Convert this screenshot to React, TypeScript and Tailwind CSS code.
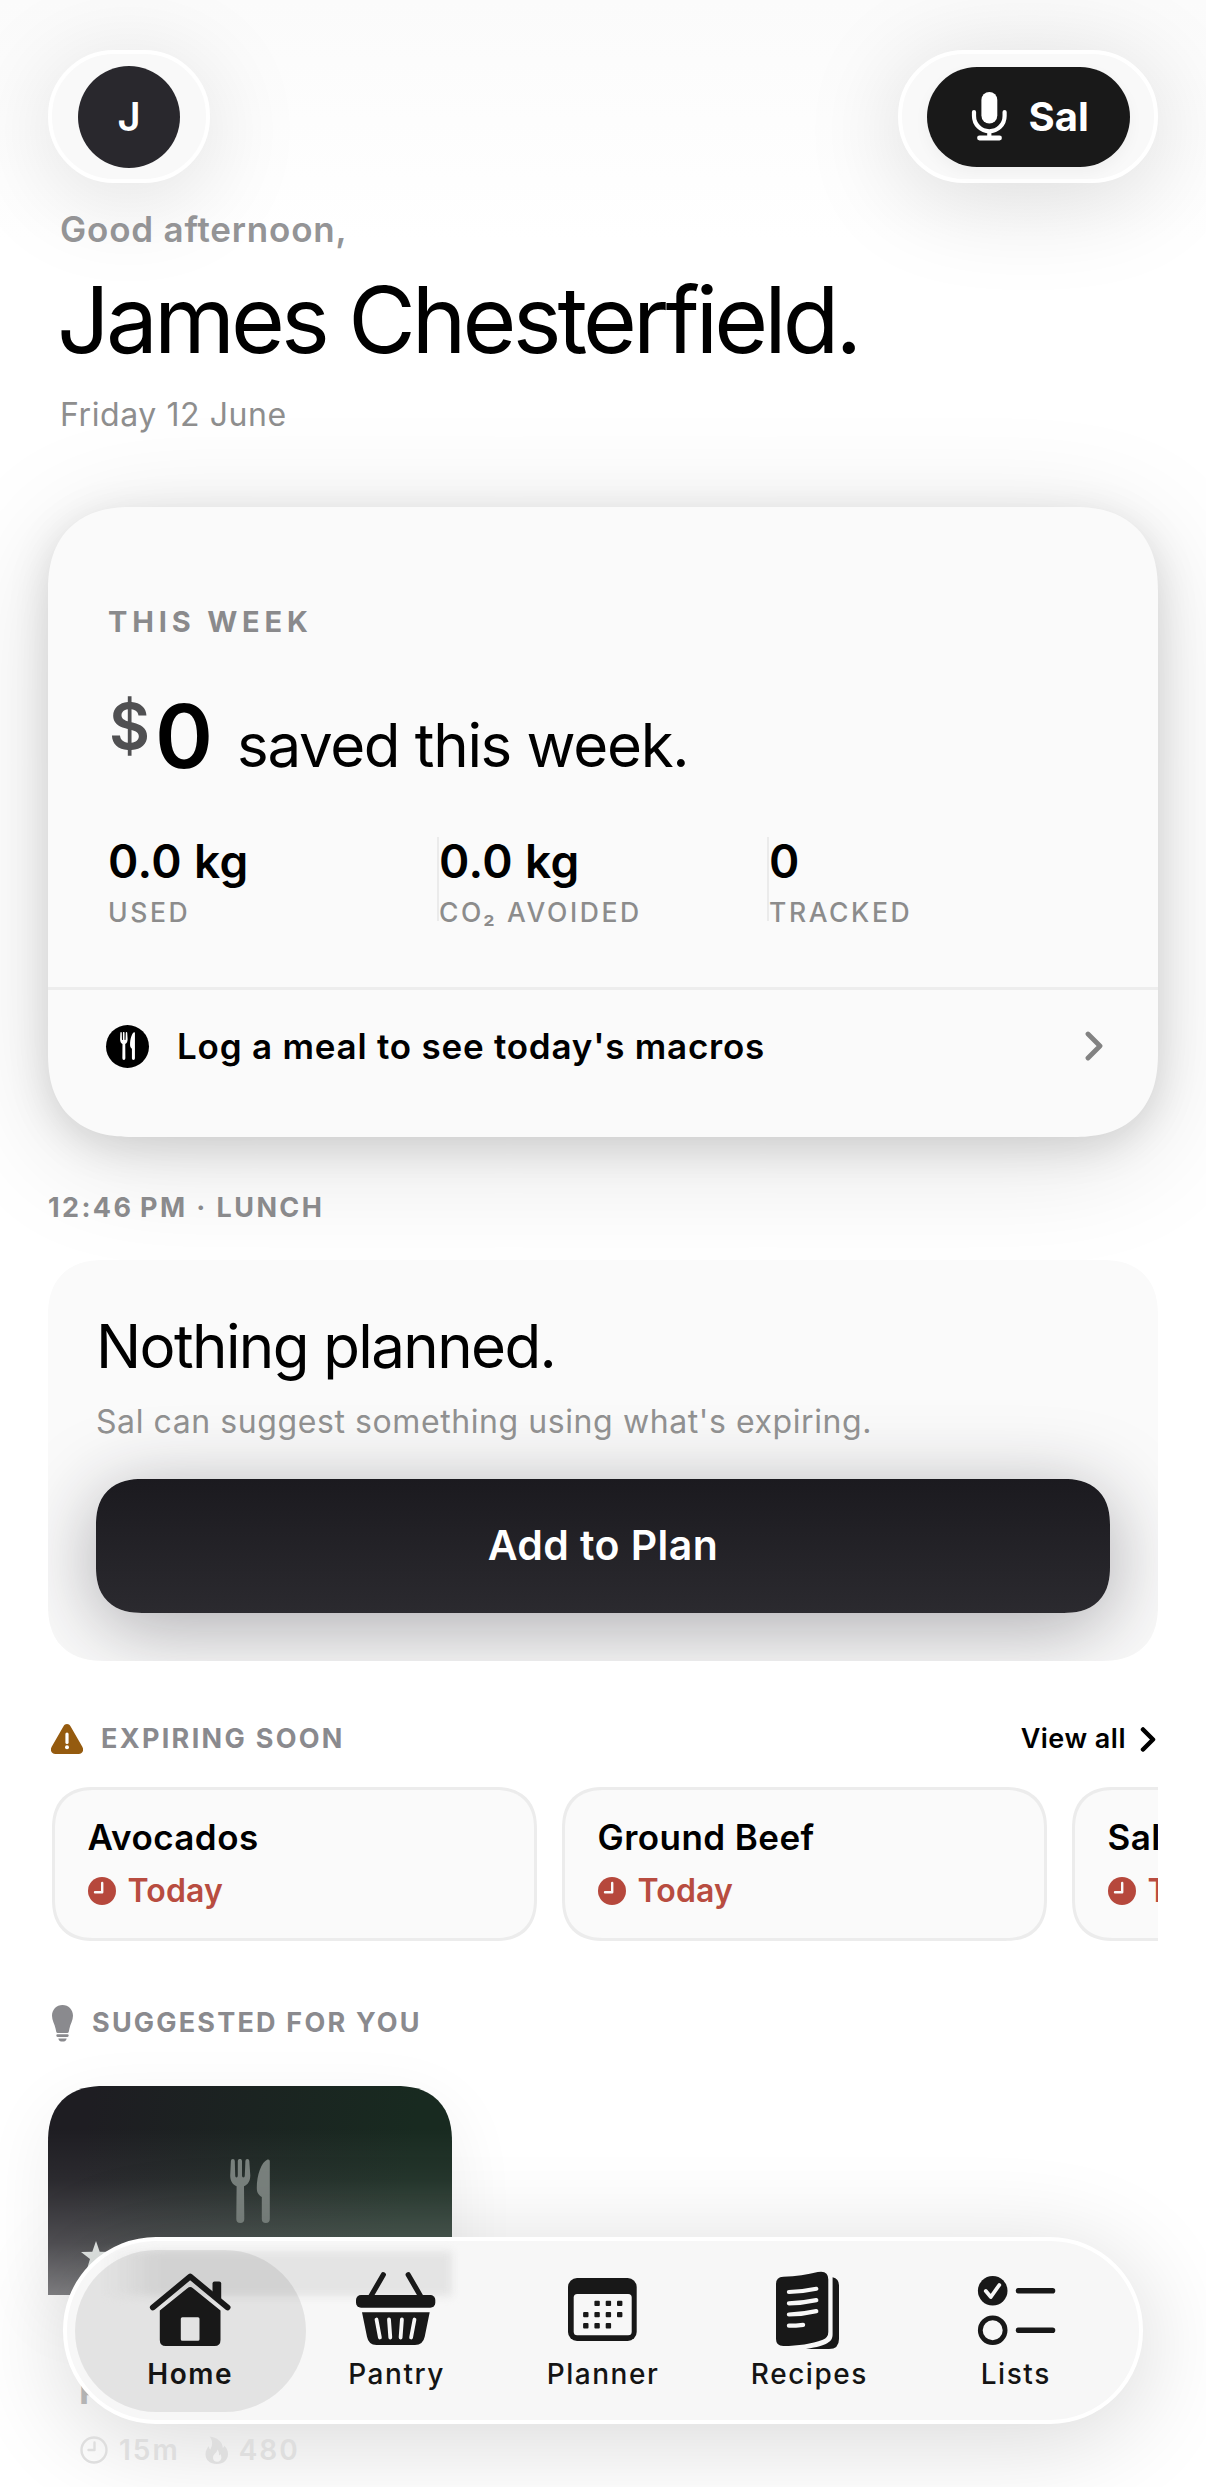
import type { ReactNode } from "react";

function ForkKnife({ className }: { className: string }) {
  return (
    <svg viewBox="0 0 40 64" className={className} fill="currentColor" preserveAspectRatio="none">
      <path d="M.9 2a1.9 1.9 0 0 1 3.9 0L5.2 16.5q0 2 1.3 2t1.3-2V2a2.1 2.1 0 0 1 4.2 0v14.500q0 2 1.400 2t1.400-2L15.400 2a1.900 1.900 0 0 1 3.900 0L20.300 16.500c0 5-2 9-6.300 10.800L14.300 60a3.900 3.900 0 0 1-8 0L6.600 27.300C2.300 25.500.200 21.500.200 16.500z" />
      <path d="M37.500.600q2.300-.600 2.300 1.600V60a4 4 0 0 1-8 0V38c-3.600-2.200-5-4.500-5-9C26.800 16 31.500 3 37.500.600z" />
    </svg>
  );
}

function MicIcon() {
  return (
    <svg viewBox="0 0 37 51" className="h-[51px] w-[37px]" fill="none" stroke="currentColor" strokeLinecap="round">
      <rect x="10.400" y="1" width="15.900" height="31.500" rx="7.950" fill="currentColor" stroke="none" />
      <path d="M3 21v4a15.300 15.300 0 0 0 30.600 0v-4M18.300 41v5" strokeWidth="4.200" />
      <path d="M8.500 47h20" strokeWidth="4.800" />
    </svg>
  );
}

function ChevronRight({ className, weight }: { className: string; weight: number }) {
  return (
    <svg viewBox="0 0 18 30" className={className} fill="none" stroke="currentColor" strokeWidth={weight} strokeLinecap="round" strokeLinejoin="round">
      <path d="M3 3l12 12L3 27" />
    </svg>
  );
}

function WarningIcon() {
  return (
    <svg viewBox="0 0 32 30" className="h-[30px] w-8">
      <path d="M16 0c1.500 0 2.700.800 3.500 2.200l11.800 20.600c2 3.500.200 7.200-3.800 7.200h-23c-4 0-5.800-3.700-3.800-7.200L12.500 2.200C13.300.800 14.500 0 16 0z" fill="#955b0f" />
      <path d="M16 10v8.500" stroke="#fff" strokeWidth="3.200" strokeLinecap="round" />
      <circle cx="16" cy="23.200" r="2" fill="#fff" />
    </svg>
  );
}

function BulbIcon() {
  return (
    <svg viewBox="0 0 21 37" className="h-[37px] w-[21px]" fill="#8a8a8e">
      <path d="M10.500 0C16.500 0 21 4.600 21 10.800c0 4.700-2.600 8.200-3.600 13l-.7 3.200q-.3 1.100-1.400 1.100H5.700q-1.100 0-1.400-1.100l-.7-3.200C2.600 19 0 15.500 0 10.800 0 4.600 4.500 0 10.500 0z" />
      <path d="M5.600 29.300h9.800a1.300 1.300 0 0 1 0 2.600H5.600a1.300 1.300 0 0 1 0-2.600zM6.300 33.400h8.400q-.8 3.200-4.200 3.200t-4.200-3.200z" />
    </svg>
  );
}

function ClockFilled() {
  return (
    <svg viewBox="0 0 28 28" className="size-7 shrink-0">
      <circle cx="14" cy="14" r="14" fill="#b6483c" />
      <path d="M14.200 6v9.200H7" fill="none" stroke="#fafafa" strokeWidth="2.400" strokeLinecap="round" strokeLinejoin="round" />
    </svg>
  );
}

function HomeIcon() {
  return (
    <g transform="translate(1.500 2)">
      <path d="M63 26V11.500q0-2 2-2h4.700q2 0 2 2V32z" fill="#181818" />
      <path d="M3.300 35.400L40.700 4.600l37.400 30.800" fill="none" stroke="#181818" strokeWidth="5.800" strokeLinecap="round" strokeLinejoin="round" />
      <path fillRule="evenodd" d="M37.900 16.200q2.800-2.300 5.600 0L71 38.500V68q0 6-6 6H16.300q-6 0-6-6V38.500zM32.800 45.300q-1.500 0-1.500 1.500v20.400q0 1.500 1.500 1.500h15.700q1.500 0 1.500-1.500V46.800q0-1.500-1.500-1.500z" fill="#181818" />
    </g>
  );
}

function BasketIcon() {
  return (
    <g transform="translate(0 1)">
      <path d="M28.300 3.700L15.700 25.500M53.200 3.700l12.600 21.800" stroke="#181818" strokeWidth="5.200" strokeLinecap="round" />
      <rect x="1" y="24" width="79.300" height="12.700" rx="5" fill="#181818" />
      <path d="M7 41.300h67.700l-5 24.500Q68 74 60 74H21.500q-8 0-9.500-8.200z" fill="#181818" />
      <path d="M21.500 48.500l3.400 18M34 48.500l1.300 18M46.900 48.500l-1.300 18M59.500 48.500l-3.400 18" stroke="#f7f7f7" strokeWidth="3.800" strokeLinecap="round" />
    </g>
  );
}

function PlannerIcon() {
  const dots = [[1, 0], [2, 0], [3, 0], [0, 1], [1, 1], [2, 1], [3, 1], [0, 2], [1, 2], [2, 2]];
  return (
    <g transform="translate(5.700 6)" fill="#181818">
      <rect x="1.300" y="2" width="68.700" height="63" rx="9" />
      <rect x="7" y="18" width="58" height="41.300" rx="3.500" fill="#f7f7f7" />
      {dots.map(([c, r]) => (
        <rect key={`${c}-${r}`} x={16.400 + c * 11.300} y={24.700 + r * 11.200} width="5.400" height="5.400" rx="1" />
      ))}
    </g>
  );
}

function RecipesIcon() {
  return (
    <g transform="translate(7.300 0)">
      <path d="M58.300 7.300q6.400 1.500 6.400 8V69q0 10-10 10h-23c12-2 17-3.500 21.500-6 4-2.300 5.100-5 5.100-9z" fill="#181818" />
      <path d="M9 6.800C22 6.500 33 4.600 43.500 2q10.500-2 10.500 7.500V62q0 5.500-5.500 7.700C37 74 24 75.800 9 76q-7.300 0-7.300-7V14q0-7 7.300-7.200z" fill="#181818" />
      <path d="M14.600 22q14-.3 27.400-3.200M14.600 33.300q14-.3 27.400-3.200M14.600 44.500q14-.3 27.400-3.400M14.600 55.700q7 0 14.200-.9" fill="none" stroke="#f7f7f7" strokeWidth="4.200" strokeLinecap="round" />
    </g>
  );
}

function ListsIcon() {
  return (
    <g transform="translate(3 5)" fill="none" stroke="#181818" strokeLinecap="round" strokeLinejoin="round">
      <circle cx="15.700" cy="15.700" r="14.800" fill="#181818" stroke="none" />
      <path d="M8.800 16l5 6L22.300 10" stroke="#f7f7f7" strokeWidth="3.800" />
      <circle cx="15.700" cy="55.300" r="12.400" strokeWidth="4.800" />
      <path d="M41.500 15.700h34M41.500 55.300h34" strokeWidth="5.600" />
    </g>
  );
}

function ExpiringCard({ name }: { name: string }) {
  return (
    <div className="flex h-[154px] w-[485px] shrink-0 flex-col rounded-[42px] border-[3px] border-[#ececec] bg-[#fafafa] pt-[25px] pl-[33px] [corner-shape:superellipse(1.25)]">
      <p className="text-[35px] leading-[44px] font-semibold tracking-[0.450px] whitespace-nowrap text-black">{name}</p>
      <div className="mt-[14px] flex items-center">
        <ClockFilled />
        <span className="ml-[12px] text-[32px] leading-9 font-semibold tracking-[0.140px] text-[#b84c40]">Today</span>
      </div>
    </div>
  );
}

function Stat({ value, label, divider }: { value: string; label: string; divider?: boolean }) {
  return (
    <div className={divider ? "-ml-px h-[84px] border-l-2 border-[#ebebeb]" : "h-[84px]"}>
      <p className="text-[46px] leading-[48px] font-semibold tracking-[0.400px] text-black">{value}</p>
      <p className="mt-[18px] text-[26.500px] leading-[18px] font-[550] tracking-[2.600px] whitespace-nowrap text-[#8c8c8c]">{label}</p>
    </div>
  );
}

function Tab({ label, icon, active }: { label: string; icon: ReactNode; active?: boolean }) {
  return (
    <div className="flex flex-col items-center">
      <svg viewBox="0 0 84 84" className="size-[84px]">{icon}</svg>
      <span className={active ? "mt-1.5 text-[28px] leading-7 font-semibold tracking-[1.500px] text-[#141414]" : "mt-1.5 text-[28px] leading-7 font-medium tracking-[1.550px] text-[#141414]"}>
        {label}
      </span>
    </div>
  );
}

export default function App() {
  return (
    <div className="relative h-[2487px] w-[1206px] overflow-hidden bg-white bg-linear-to-b from-[#fbfbfb] to-white to-[240px] px-12 font-['Inter','Noto_Sans',sans-serif]">
      <header className="flex justify-between pt-[50px]">
        <div className="flex h-[133px] w-[162px] items-center justify-center rounded-[66px] border-4 border-white bg-[#f9f9f9] shadow-[0_14px_100px_rgba(0,0,0,0.13)]">
          <div className="flex size-[102px] items-center justify-center rounded-full bg-[#29282d] text-[40px] font-semibold text-white">J</div>
        </div>
        <div className="flex h-[133px] w-[260px] items-center justify-center rounded-[66px] border-4 border-white bg-[#f9f9f9] shadow-[0_14px_100px_rgba(0,0,0,0.15)]">
          <button className="flex h-[100px] w-[203px] items-center rounded-[50px] bg-[#191919] pl-[44px] text-white shadow-[0_6px_16px_rgba(0,0,0,0.04)]">
            <MicIcon />
            <span className="ml-[21px] text-[40px] leading-[50px] font-bold">Sal</span>
          </button>
        </div>
      </header>

      <section className="relative pl-3">
        <p className="mt-6 text-[35px] leading-[44px] font-semibold tracking-[0.800px] text-[#949496]">Good afternoon,</p>
        <h1 className="mt-3 -ml-[3px] text-[92.500px] leading-[112px] font-normal tracking-[-3.900px] whitespace-nowrap text-black">James Chesterfield.</h1>
        <p className="mt-5 text-[32px] leading-10 tracking-[0.580px] text-[#8e8e8e]">Friday 12 June</p>
      </section>

      <section className="mt-[72px] h-[630px] rounded-[84px] bg-[#fafafa] pt-[97px] shadow-[0_10px_42px_rgba(0,0,0,0.13),0_20px_120px_rgba(0,0,0,0.13)] [corner-shape:superellipse(1.25)]">
        <div className="px-[60px]">
          <h2 className="text-[29px] leading-9 font-bold tracking-[4.830px] text-[#8a8a8c]">THIS WEEK</h2>
          <p className="mt-12 flex h-24 items-baseline whitespace-nowrap">
            <span className="ml-px -translate-y-[19px] text-[63px] leading-[96px] font-semibold text-[#505052]">$</span>
            <span className="ml-[5px] text-[88px] leading-[96px] font-semibold text-black">0</span>
            <span className="ml-[24px] -translate-y-px text-[60px] leading-[96px] tracking-[-1.300px] text-black">saved this week.</span>
          </p>
          <div className="mt-[53px] grid grid-cols-3">
            <Stat value="0.0 kg" label="USED" />
            <Stat value="0.0 kg" label="CO₂ AVOIDED" divider />
            <Stat value="0" label="TRACKED" divider />
          </div>
        </div>
        <div className="mt-[66px] flex h-[115px] items-center border-t-[3px] border-[#ededed] pr-[55px] pl-[58px]">
          <div className="flex size-[43px] items-center justify-center rounded-full bg-black text-white">
            <ForkKnife className="h-7 w-[15px]" />
          </div>
          <p className="ml-[28px] text-[35px] leading-[44px] font-semibold tracking-[0.780px] text-black">Log a meal to see today's macros</p>
          <ChevronRight className="ml-auto h-[30px] w-[18px] text-[#828282]" weight={4.800} />
        </div>
      </section>

      <h2 className="relative mt-[55px] text-[27px] leading-8 font-bold tracking-[2.400px] text-[#8a8a8c]">{"12:46\u202fPM · LUNCH"}</h2>
      <section className="relative mt-9 h-[401px] overflow-hidden rounded-[56px] bg-[#fafafa] px-12 pt-[50px] [corner-shape:superellipse(1.25)]">
        <h3 className="text-[60px] leading-[72px] tracking-[-1.600px] text-black">Nothing planned.</h3>
        <p className="mt-5 text-[32px] leading-10 tracking-[0.580px] text-[#909090]">Sal can suggest something using what's expiring.</p>
        <button className="mt-[37px] flex h-[134px] w-full items-center justify-center rounded-[46px] bg-linear-to-b from-[#1b1a1f] to-[#2b2a2f] text-[41px] font-semibold tracking-[0.420px] text-white shadow-[0_14px_80px_rgba(27,26,36,0.36)] [corner-shape:superellipse(1.25)]">
          Add to Plan
        </button>
      </section>

      <div className="mt-[60px] flex h-9 items-center pl-[3px]">
        <WarningIcon />
        <h2 className="ml-[18px] text-[27px] font-bold tracking-[2.300px] text-[#8a8a8e]">EXPIRING SOON</h2>
        <span className="ml-auto text-[27px] font-semibold tracking-[0.500px] text-black">View all</span>
        <ChevronRight className="mr-[2px] ml-[14px] h-[25px] w-[16px] text-black" weight={5.400} />
      </div>
      <div className="mt-[30px] flex gap-[25px] overflow-hidden pl-[3.500px]">
        <ExpiringCard name="Avocados" />
        <ExpiringCard name="Ground Beef" />
        <ExpiringCard name="Salmon" />
      </div>

      <div className="mt-[62px] flex h-10 items-center pl-1">
        <BulbIcon />
        <h2 className="ml-[19px] text-[27px] font-bold tracking-[2.200px] text-[#8a8a8e]">SUGGESTED FOR YOU</h2>
      </div>

      <article className="mt-[43px] h-[402px] w-[404px] rounded-[56px]">
        <div className="relative flex h-[209px] justify-center rounded-t-[56px] bg-[linear-gradient(to_bottom,transparent_20%,rgba(255,255,255,0.06)_45%,rgba(255,255,255,0.22)_75%,rgba(255,255,255,0.44)),linear-gradient(100deg,#1e1d22_10%,#182a20_85%)] pt-[73px] shadow-[0_20px_70px_rgba(0,0,0,0.07)] [corner-shape:superellipse(1.25)]">
          <ForkKnife className="h-16 w-10 text-[#79817d]" />
          <svg viewBox="0 0 30 30" className="absolute bottom-[24px] left-[33px] size-[30px]" fill="#e1e5e3">
            <path d="M15 0l3.700 10.800L30 11l-9 7 3.300 11L15 22.400 5.700 29 9 18 0 11l11.300-.2z" />
          </svg>
        </div>
        <h3 className="mt-[74px] pl-[31px] text-[36px] leading-[44px] font-bold text-[#c0c0c0]">P</h3>
        <div className="relative z-10 mt-[22px] flex h-[30px] items-center pl-[32px] text-[28px] font-semibold tracking-[2px] text-[#dedede]">
          <svg viewBox="0 0 28 28" className="size-7" fill="none" stroke="currentColor" strokeWidth="2.400" strokeLinecap="round" strokeLinejoin="round">
            <circle cx="14" cy="14" r="12.500" />
            <path d="M14.500 6.500V14H8.500" />
          </svg>
          <span className="ml-[11px]">15m</span>
          <svg viewBox="0 0 23 28" className="ml-[25px] h-7 w-[23px]" fill="currentColor" fillRule="evenodd">
            <path d="M4.500.500C12 1.500 17.500 5.500 17.800 12c.8-.4 1.300-1.200 1.500-2.200C21.800 12 23 14.800 23 18c0 6-4.500 10-11.200 10C5 28 .500 24 .500 18.200c0-3.600 1.600-5.700 3.300-8.200.1 1.500.5 2.600 1.400 3.400C7.800 9.500 8 4.500 4.500.500zM12.300 13.500c.2 3-4.300 4.500-4.300 8.300 0 2.400 1.700 4 4.200 4s4.200-1.600 4.200-4.200c0-1.500-.4-2.700-1.200-3.700-.2.800-.6 1.300-1.200 1.500.2-2.400-.2-4.400-1.700-5.900z" />
          </svg>
          <span className="ml-[11px]">480</span>
        </div>
      </article>

      <nav className="absolute top-[2237px] left-[63px] h-[187px] w-[1080px] rounded-[93px] border-4 border-white bg-[#f7f7f7] shadow-[0_14px_100px_rgba(0,0,0,0.16)]">
        <div className="absolute top-[10px] left-[36px] h-[45px] w-[349px] bg-linear-to-r from-[#e4e4e4]/0 to-[#e4e4e4] to-[56px] blur-[4px]" />
        <div className="absolute top-[9px] left-2 h-[162px] w-[231px] rounded-[81px] bg-black/8" />
        <div className="relative grid grid-cols-5 pt-[29px] pr-[20px] pl-[20px]">
          <Tab label="Home" icon={<HomeIcon />} active />
          <Tab label="Pantry" icon={<BasketIcon />} />
          <Tab label="Planner" icon={<PlannerIcon />} />
          <Tab label="Recipes" icon={<RecipesIcon />} />
          <Tab label="Lists" icon={<ListsIcon />} />
        </div>
      </nav>
    </div>
  );
}
